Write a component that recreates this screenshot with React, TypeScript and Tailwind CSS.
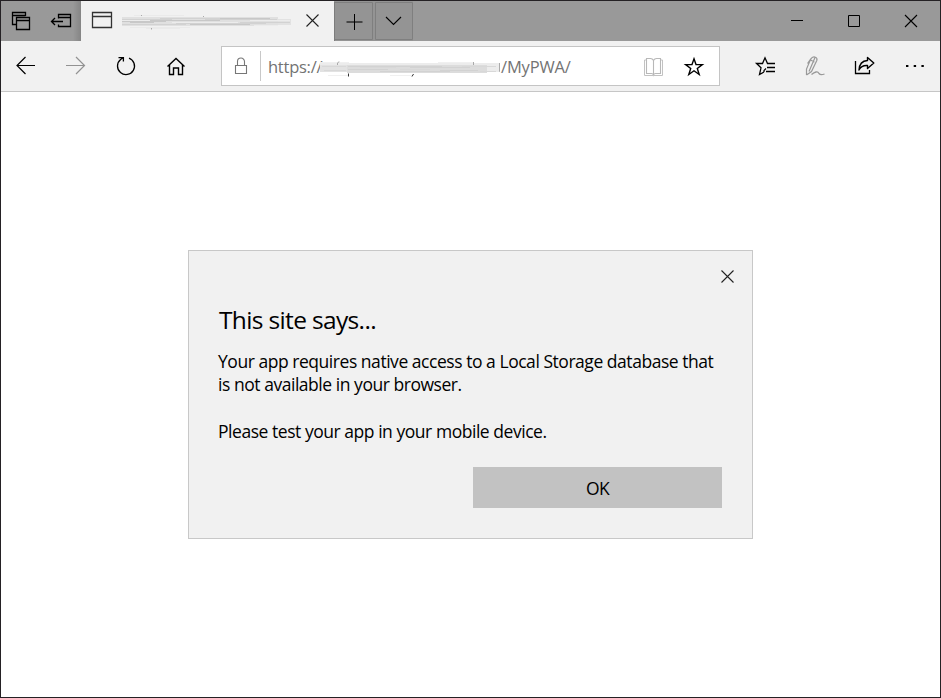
import React from "react";

type GlyphProps = {
  box: string;
  className: string;
  children: React.ReactNode;
};

// Each glyph uses window coordinates, so its viewBox is the cell it fills.
function Glyph({ box, className, children }: GlyphProps) {
  return (
    <svg viewBox={box} className={`block shrink-0 ${className}`} fill="none" stroke="#000" strokeWidth="1.3">
      {children}
    </svg>
  );
}

function TabSmudge() {
  return (
    <svg viewBox="122 1 170 40" className="block h-10 w-[170px] shrink-0" fill="none">
      <rect x="122" y="17" width="156" height="9" fill="#e0e0e0" />
      <rect x="278" y="19" width="13" height="6" fill="#e2e2e2" />
      <path d="M122 19.500h50M160 18.500h60M205 19.500h72M122 24.500h64M176 23.500h90M240 22.500h50" stroke="#d2d2d2" />
      <path d="M122 21.500h44M150 20.500h70M190 24.500h60M220 18.500h50M130 22.500h24" stroke="#c8c8c8" />
      <path d="M122 20.500h28M172 22.500h66M250 20.500h40M254 25.500h24" stroke="#ececec" />
      <path d="M134 15.500h50M130 27.500h60M146 28.500h34" stroke="#eaeaea" />
      <path d="M141.500 15v1M151.500 28v1.500M203.500 16v1" stroke="#aaa" />
    </svg>
  );
}

function UrlSmudge() {
  return (
    <svg viewBox="320 47 180 38" className="block h-[38px] w-[180px] shrink-0" fill="none">
      <rect x="320" y="63" width="180" height="9" fill="#ececec" />
      <rect x="320" y="65" width="27" height="7" fill="#e2e2e2" />
      <rect x="347" y="65" width="140" height="8" fill="#dcdcdc" />
      <path d="M348 66.500h94M380 71.500h70M348 69.500h40M410 67.500h60M440 70.500h38" stroke="#d2d2d2" />
      <path d="M322 66.500h24M324 70.500h22M360 67.500h36M400 69.500h30M462 66.500h34M480 71.500h16" stroke="#d8d8d8" />
      <path d="M320 62.500h17M340 62.500h9M438 62.500h36M328 75.500h20M390 75.500h22" stroke="#f0f0f0" />
      <path d="M337.500 65v-2q0-1 2-1M473.500 62v3M499.500 63v8q.2 1 .5 1" stroke="#aaa" />
      <path d="M348.500 73.500v3M413.500 74l-1.500 2.500" stroke="#333" />
    </svg>
  );
}

function TabStrip() {
  return (
    <div className="flex h-10 bg-[#999999]">
      <div className="flex w-20 shrink-0 bg-gradient-to-r from-[#999] from-90% to-[#858585]">
        <Glyph box="1 1 40 40" className="size-10">
          <path d="M16.500 24.500H12.500V12.500H25.500V16M12.500 15.500H25.500M16.500 17.500H29.500V29.500H16.500ZM16.500 20.500H29.500" />
        </Glyph>
        <Glyph box="41 1 40 40" className="size-10">
          <path d="M58.500 18.500V14.500H70.500V26.500H58.500V24.500M58.500 17.500H70.500M63 21.500H52M55 18l-3.500 3.500L55 25" />
        </Glyph>
      </div>
      <div className="flex w-[253px] shrink-0 bg-[#f1f1f1]">
        <Glyph box="81 1 41 40" className="h-10 w-[41px]">
          <path d="M92.500 12.500H111.500V27.500H92.500ZM92.500 16.500H111.500" stroke="#333" />
        </Glyph>
        <TabSmudge />
        <Glyph box="292 1 42 40" className="h-10 w-[42px]">
          <path d="M306.500 14.500l12 12M318.500 14.500l-12 12" stroke="#222" strokeWidth="1.1" />
        </Glyph>
      </div>
      <div className="flex gap-0.5 bg-[#949494] pt-px">
        <Glyph box="334 2 39 39" className="h-[39px] w-[39px]">
          <path d="M334.500 2V41" stroke="#7c7c7c" strokeWidth="1" />
          <path d="M335 2.500H372.500V39.500H335" stroke="#7f7f7f" strokeWidth="1" />
          <path d="M346.500 22H362.500" stroke="#333" strokeWidth="1.6" />
          <path d="M354.500 14V30" strokeWidth="1" />
        </Glyph>
        <Glyph box="375 2 38 39" className="h-[39px] w-[38px]">
          <path d="M375.500 2.500H412.500V39.500H375.500Z" stroke="#7f7f7f" strokeWidth="1" />
          <path d="M386 17l7.500 7.500L401 17" strokeWidth="1.1" />
        </Glyph>
      </div>
      <div className="ml-auto flex">
        <Glyph box="768 1 57 40" className="h-10 w-[57px]">
          <path d="M791 20.500h12" strokeWidth="1" />
        </Glyph>
        <Glyph box="825 1 57 40" className="h-10 w-[57px]">
          <path d="M848.500 15.500H859.500V26.500H848.500Z" strokeWidth="1" />
        </Glyph>
        <Glyph box="882 1 58 40" className="h-10 w-[58px]">
          <path d="M905 15l12 12M917 15l-12 12" strokeWidth="1.1" />
        </Glyph>
      </div>
    </div>
  );
}

function AddressBar() {
  return (
    <div className="mx-5 flex h-10 w-[499px] shrink-0 items-center border border-[#c4c4c4] bg-white">
      <Glyph box="222 47 38 38" className="size-[38px]">
        <path d="M235.500 65.500H246.500V73.500H235.500ZM237.500 65V61.500a3.500 3.500 0 0 1 7 0V65" stroke="#777" strokeWidth="1.1" />
      </Glyph>
      <div className="h-[30px] w-px bg-[#c8c8c8]" />
      <div className="flex h-[38px] items-center pl-[7px] font-['Open_Sans','Noto_Sans',sans-serif] text-[16.500px] text-[#737373]">
        <span className="w-[52px] pt-0.5 whitespace-nowrap tracking-[-0.25px]">https://</span>
        <UrlSmudge />
        <span className="w-[72px] pt-0.5 pl-px whitespace-nowrap tracking-[-0.15px]">/MyPWA/</span>
      </div>
      <div className="ml-auto flex">
        <Glyph box="633 47 41 38" className="h-[38px] w-[41px]">
          <path d="M653.500 60.500q-1-2-3-2H646.500V73.500h5q1.500 0 2 1.500q.500-1.500 2-1.500h5V58.500H656.500q-2 0-3 2V74" stroke="#b8b8b8" strokeWidth="1.1" />
          <path d="M646 60H644.500V75.500H662.500V60H661" stroke="#c2c2c2" strokeWidth="1" />
        </Glyph>
        <Glyph box="674 47 45 38" className="h-[38px] w-[45px]">
          <path d="M694 58.800l2 5.800h6.300l-5 3.800l1.900 6.100l-5.200-3.700l-5.200 3.700l1.900-6.100l-5-3.800h6.300Z" strokeWidth="1.400" />
        </Glyph>
      </div>
    </div>
  );
}

function Toolbar() {
  return (
    <div className="flex h-[51px] border-b border-[#c6c6c6] bg-[#f1f1f1]">
      <Glyph box="1 41 50 50" className="size-[50px]">
        <path d="M35 65.500H17M25.500 57l-8.500 8.500l8.500 8.500" strokeWidth="1.2" />
      </Glyph>
      <Glyph box="51 41 50 50" className="size-[50px]">
        <path d="M66 65.500H84M76 57l8.500 8.500L76 74" stroke="#929292" strokeWidth="1.2" />
      </Glyph>
      <Glyph box="101 41 50 50" className="size-[50px]">
        <path d="M129 58.100A8.500 8.500 0 1 1 120.600 59.500L123 57.800M118.500 57.600H123.400V61.500" strokeWidth="1.3" />
      </Glyph>
      <Glyph box="151 41 50 50" className="size-[50px]">
        <path d="M167.500 66.500L176 58.500L184.500 66.500M169.500 65V74.500H173.500V68H178.500V74.500H182.500V65" strokeWidth="1.4" />
      </Glyph>
      <div className="flex items-center">
        <AddressBar />
      </div>
      <Glyph box="740 41 50 50" className="size-[50px]">
        <path d="M775 63.500H767.500L765 57.800L762.500 63.500H756.500L761 67.800L759.500 74.500L764 72M767 67.500H775M766 71.500H775" strokeWidth="1.3" />
        <path d="M764 72V70.500L766 68.500" strokeWidth="1.2" />
      </Glyph>
      <Glyph box="790 41 50 50" className="size-[50px]">
        <path d="M806.500 75V69L810.500 59.500Q812.500 56 815 57Q817.700 58 816.800 60.500L811.500 71.500L806.500 75M810.500 60L814.500 62M815 57.500L809 71.500M811 58.500L807.500 63.500" stroke="#999" strokeWidth="1.2" />
        <path d="M811.500 74.500Q814 72.500 816 72Q818 71.500 819 73.500Q820.500 75.500 824.500 74" stroke="#999" strokeWidth="1.3" />
      </Glyph>
      <Glyph box="840 41 50 50" className="size-[50px]">
        <path d="M855.500 61V73.500H869.500V70" strokeWidth="1.3" />
        <path d="M867.500 57.500L873.800 63L867.500 68.500V65.500Q861.500 65 859 70Q859.500 61 867.500 60.500Z" strokeWidth="1.4" strokeLinejoin="round" />
      </Glyph>
      <Glyph box="890 41 50 50" className="size-[50px]">
        <path d="M906 66h2.400M913.700 66h2.400M921.400 66h2.400" strokeWidth="2.200" />
      </Glyph>
    </div>
  );
}

function SiteDialog() {
  return (
    <section
      role="dialog"
      className="flex h-[289px] w-[565px] flex-col border border-[#c8c8c8] bg-[#f1f1f1] px-[29px] font-['Open_Sans','Noto_Sans',sans-serif] text-black"
    >
      <div className="-mr-6 flex h-[52px] shrink-0 justify-end">
        <Glyph box="707 251 40 52" className="h-[52px] w-10">
          <path d="M721.500 270.500l12 12M733.500 270.500l-12 12" stroke="#222" strokeWidth="1.1" />
        </Glyph>
      </div>
      <h1 className="h-[47px] shrink-0 pl-px text-[24.500px] leading-[34px] tracking-[-0.65px] whitespace-nowrap">This site says...</h1>
      <div className="h-[117px] shrink-0 text-[17.500px] leading-[23.400px] tracking-[-0.460px] whitespace-nowrap">
        <p>Your app requires native access to a Local Storage database that</p>
        <p>is not available in your browser.</p>
        <p className="mt-[23.400px]">Please test your app in your mobile device.</p>
      </div>
      <button className="ml-auto mr-px h-[41px] w-[249px] shrink-0 bg-[#c2c2c2] pt-0.5 text-[17.500px] tracking-[-0.6px]">OK</button>
    </section>
  );
}

export default function App() {
  return (
    <div className="flex h-[698px] w-[941px] flex-col overflow-hidden border border-[#242124] bg-white">
      <TabStrip />
      <Toolbar />
      <main className="flex flex-1 justify-center bg-white pt-[158px]">
        <SiteDialog />
      </main>
    </div>
  );
}
